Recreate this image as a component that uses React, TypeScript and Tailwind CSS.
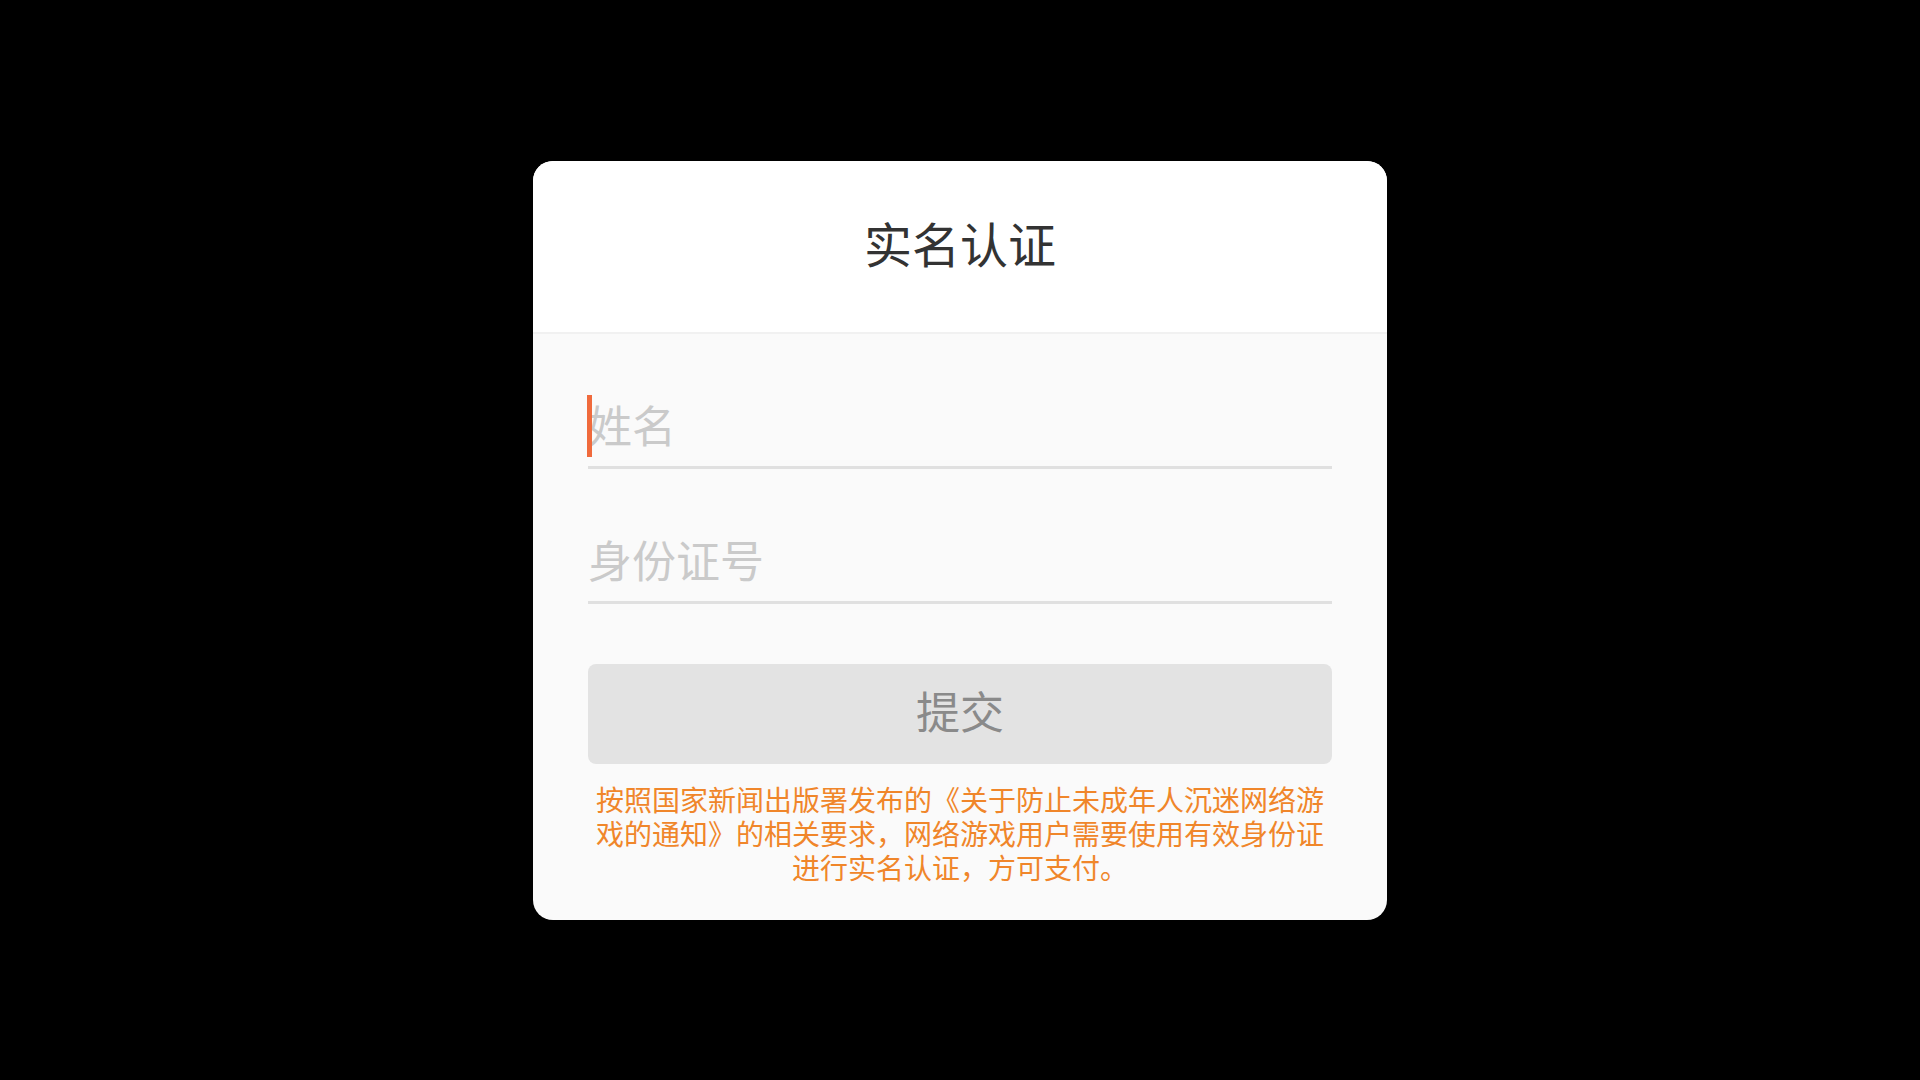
const FONT = "font-['Noto_Sans_CJK_SC','Noto_Sans',sans-serif]";

const Field = ({ placeholder, focused }: { placeholder: string; focused?: boolean }) => (
  <div className="relative h-[75px] border-b-[3px] border-[#e0e0e0] flex items-center pb-[12px]">
    {focused && <span className="absolute left-[-1px] top-[1px] w-[5px] h-[62px] bg-[#f06a3c]" />}
    <span className="text-[44px] leading-none text-[#cacaca]">{placeholder}</span>
  </div>
);

export default function App() {
  return (
    <div className={`w-screen h-screen bg-black flex items-center justify-center ${FONT}`}>
      <div className="w-[854px] rounded-[20px] overflow-hidden bg-[#fafafa]">
        {/* Header */}
        <div className="h-[173px] bg-white border-b-2 border-[#f1f1f1] flex items-center justify-center pb-[8px]">
          <h1 className="text-[48px] leading-none text-[#333333] font-normal">实名认证</h1>
        </div>

        {/* Form */}
        <div className="px-[55px] pt-[60px] pb-[32px]">
          <Field placeholder="姓名" focused />
          <div className="mt-[60px]">
            <Field placeholder="身份证号" />
          </div>
          <button className="mt-[60px] w-full h-[100px] pb-[8px] rounded-[8px] bg-[#e3e3e3] text-[44px] leading-none text-[#8a8a8a]">
            提交
          </button>
          <div className="mt-[18px] pb-[4px] text-center text-[28px] leading-[34px] text-[#f0862a]">
            <div className="whitespace-nowrap">按照国家新闻出版署发布的《关于防止未成年人沉迷网络游</div>
            <div className="whitespace-nowrap">戏的通知》的相关要求，网络游戏用户需要使用有效身份证</div>
            <div className="whitespace-nowrap">进行实名认证，方可支付。</div>
          </div>
        </div>
      </div>
    </div>
  );
}
